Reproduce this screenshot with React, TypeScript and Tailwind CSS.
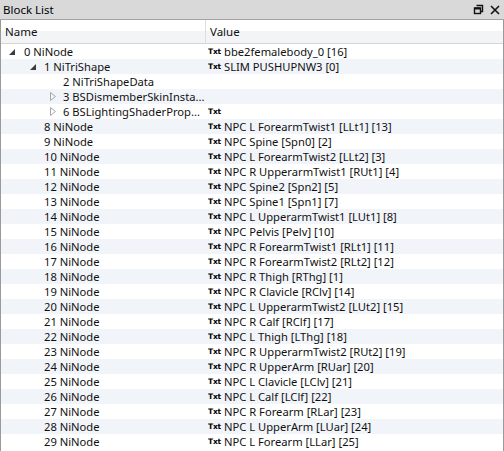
import React from 'react';

type Row = {
  name: string;
  value?: string;
  txt?: boolean;
  level: number;
  arrow?: 'open' | 'closed';
};

const rows: Row[] = [
  { name: '0 NiNode', value: 'bbe2femalebody_0 [16]', txt: true, level: 0, arrow: 'open' },
  { name: '1 NiTriShape', value: 'SLIM PUSHUPNW3 [0]', txt: true, level: 1, arrow: 'open' },
  { name: '2 NiTriShapeData', level: 2 },
  { name: '3 BSDismemberSkinInsta...', level: 2, arrow: 'closed' },
  { name: '6 BSLightingShaderProp...', txt: true, value: '', level: 2, arrow: 'closed' },
  { name: '8 NiNode', value: 'NPC L ForearmTwist1 [LLt1] [13]', txt: true, level: 1 },
  { name: '9 NiNode', value: 'NPC Spine [Spn0] [2]', txt: true, level: 1 },
  { name: '10 NiNode', value: 'NPC L ForearmTwist2 [LLt2] [3]', txt: true, level: 1 },
  { name: '11 NiNode', value: 'NPC R UpperarmTwist1 [RUt1] [4]', txt: true, level: 1 },
  { name: '12 NiNode', value: 'NPC Spine2 [Spn2] [5]', txt: true, level: 1 },
  { name: '13 NiNode', value: 'NPC Spine1 [Spn1] [7]', txt: true, level: 1 },
  { name: '14 NiNode', value: 'NPC L UpperarmTwist1 [LUt1] [8]', txt: true, level: 1 },
  { name: '15 NiNode', value: 'NPC Pelvis [Pelv] [10]', txt: true, level: 1 },
  { name: '16 NiNode', value: 'NPC R ForearmTwist1 [RLt1] [11]', txt: true, level: 1 },
  { name: '17 NiNode', value: 'NPC R ForearmTwist2 [RLt2] [12]', txt: true, level: 1 },
  { name: '18 NiNode', value: 'NPC R Thigh [RThg] [1]', txt: true, level: 1 },
  { name: '19 NiNode', value: 'NPC R Clavicle [RClv] [14]', txt: true, level: 1 },
  { name: '20 NiNode', value: 'NPC L UpperarmTwist2 [LUt2] [15]', txt: true, level: 1 },
  { name: '21 NiNode', value: 'NPC R Calf [RClf] [17]', txt: true, level: 1 },
  { name: '22 NiNode', value: 'NPC L Thigh [LThg] [18]', txt: true, level: 1 },
  { name: '23 NiNode', value: 'NPC R UpperarmTwist2 [RUt2] [19]', txt: true, level: 1 },
  { name: '24 NiNode', value: 'NPC R UpperArm [RUar] [20]', txt: true, level: 1 },
  { name: '25 NiNode', value: 'NPC L Clavicle [LClv] [21]', txt: true, level: 1 },
  { name: '26 NiNode', value: 'NPC L Calf [LClf] [22]', txt: true, level: 1 },
  { name: '27 NiNode', value: 'NPC R Forearm [RLar] [23]', txt: true, level: 1 },
  { name: '28 NiNode', value: 'NPC L UpperArm [LUar] [24]', txt: true, level: 1 },
  { name: '29 NiNode', value: 'NPC L Forearm [LLar] [25]', txt: true, level: 1 },
];

// text start x for each depth
const indent = ['pl-[23px]', 'pl-[43px]', 'pl-[62px]'];
const arrowPos = ['left-[8px]', 'left-[29px]', 'left-[49px]'];

function Arrow({ kind }: { kind: 'open' | 'closed' }) {
  if (kind === 'open') {
    return (
      <svg width="6" height="6" viewBox="0 0 6 6">
        <path d="M6 0 L6 6 L0 6 Z" fill="#3c3c3c" />
      </svg>
    );
  }
  return (
    <svg width="6" height="9" viewBox="0 0 6 9">
      <path d="M0.5 0.5 L5.5 4.5 L0.5 8.5 Z" fill="none" stroke="#a6a6a6" strokeWidth="1" />
    </svg>
  );
}

function TxtIcon() {
  return (
    <span className="flex w-[16px] shrink-0 items-center overflow-hidden text-[7.5px] font-bold leading-none tracking-[-0.2px] text-black [font-family:'DejaVu_Sans',sans-serif]">
      Txt
    </span>
  );
}

export default function App() {
  return (
    <div className="flex h-[451px] w-[504px] flex-col overflow-hidden bg-white text-[11.2px] text-[#111] [font-family:'Noto_Sans',sans-serif]">
      {/* dock title */}
      <div className="flex h-[20px] shrink-0 items-center justify-between border-b border-[#a3a3a3] bg-[#d9d9d9] pl-[3px] pr-[4px]">
        <span className="text-[11.5px] leading-none text-black">Block List</span>
        <div className="flex items-center gap-[6px]">
          <svg width="11" height="11" viewBox="0 0 11 11">
            <path d="M3.5 1.5 H9.5 V7.5 H7.5" fill="none" stroke="#111" strokeWidth="1.4" />
            <rect x="1.5" y="4" width="6" height="5.5" fill="none" stroke="#111" strokeWidth="1.4" />
            <path d="M1.5 4.5 H7.5" stroke="#111" strokeWidth="2" />
          </svg>
          <svg width="10" height="10" viewBox="0 0 10 10">
            <path d="M1 1 L9 9 M9 1 L1 9" stroke="#111" strokeWidth="1.6" />
          </svg>
        </div>
      </div>

      <div className="flex min-h-0 flex-1 flex-col border-x border-[#9a9a9a]">
        {/* column header */}
        <div className="flex h-[24px] shrink-0 border-b border-[#d5d5d5] bg-[linear-gradient(#ffffff_0%,#ffffff_50%,#f3f4f6_50%,#f3f4f6_100%)] text-[11.5px]">
          <div className="flex w-[205px] items-center border-r border-[#dedede] pl-[4px]">Name</div>
          <div className="flex items-center pl-[4px]">Value</div>
        </div>

        {/* rows */}
        <div className="flex flex-col">
          {rows.map((r, i) => (
            <div
              key={r.name}
              className={`flex h-[15px] items-center ${i % 2 === 1 ? 'bg-[#f1f4f9]' : 'bg-white'}`}
            >
              <div className={`relative flex h-full w-[206px] shrink-0 items-center ${indent[r.level]}`}>
                {r.arrow && (
                  <span className={`absolute top-0 flex h-full items-center ${arrowPos[r.level]}`}>
                    <Arrow kind={r.arrow} />
                  </span>
                )}
                <span className="whitespace-nowrap leading-none">{r.name}</span>
              </div>
              <div className="flex items-center pl-[1px]">
                {r.txt && <TxtIcon />}
                {r.value && <span className="whitespace-nowrap leading-none">{r.value}</span>}
              </div>
            </div>
          ))}
        </div>
      </div>
    </div>
  );
}
